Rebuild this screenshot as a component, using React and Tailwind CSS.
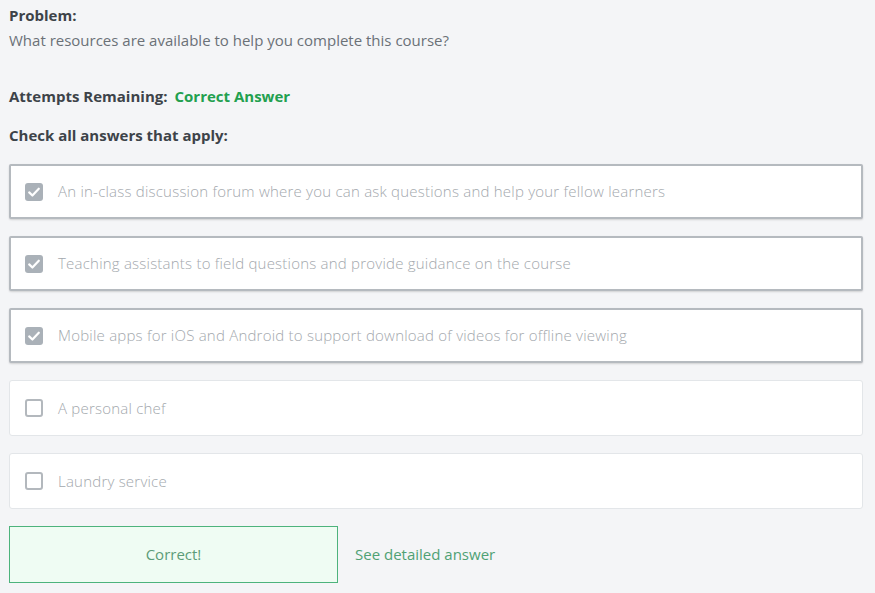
const options = [
  { label: "An in-class discussion forum where you can ask questions and help your fellow learners", checked: true },
  { label: "Teaching assistants to field questions and provide guidance on the course", checked: true },
  { label: "Mobile apps for iOS and Android to support download of videos for offline viewing", checked: true },
  { label: "A personal chef", checked: false },
  { label: "Laundry service", checked: false },
]

const Box = ({ checked }) =>
  checked ? (
    <span className="flex items-center justify-center w-[18px] h-[18px] rounded-[3px] bg-[#aab1b8] shrink-0">
      <svg width="18" height="18" viewBox="0 0 18 18" fill="none">
        <path d="M4.2 9.4l3.2 3.1 6.4-6.8" stroke="white" strokeWidth="2.2" strokeLinecap="round" strokeLinejoin="round" />
      </svg>
    </span>
  ) : (
    <span className="w-[18px] h-[18px] rounded-[3px] border-2 border-[#b3b8bd] bg-white shrink-0" />
  )

const App = () => {
  return (
    <div className="min-h-[593px] bg-[#f4f5f7] px-[9px] pt-[5px] text-[15px] font-['Open_Sans',sans-serif] text-[#3d4349]">
      <div className="font-bold leading-[20px]">Problem:</div>
      <div className="mt-[5px] leading-[20px] text-[#6b7177]">
        What resources are available to help you complete this course?
      </div>

      <div className="mt-[36px] flex gap-[7px] font-bold leading-[20px]">
        <span>Attempts Remaining:</span>
        <span className="text-[#22a04f]">Correct Answer</span>
      </div>

      <div className="mt-[19px] font-bold leading-[20px]">Check all answers that apply:</div>

      <div className="mt-[19px] mr-[3px] flex flex-col gap-[17px]">
        {options.map((o) =>
          o.checked ? (
            <div
              key={o.label}
              className="h-[55px] flex items-center gap-[15px] pl-[14px] bg-white border-2 border-[#b5babf] rounded-[2px] shadow-[0_1px_2px_rgba(0,0,0,0.15)]"
            >
              <Box checked />
              <span className="font-light tracking-[0.22px] text-[#a3a8ad]">{o.label}</span>
            </div>
          ) : (
            <div
              key={o.label}
              className="h-[56px] flex items-center gap-[15px] pl-[15px] bg-white border border-[#e3e6e9] rounded-[3px]"
            >
              <Box />
              <span className="font-light tracking-[0.22px] text-[#a3a8ad]">{o.label}</span>
            </div>
          )
        )}
      </div>

      <div className="mt-[17px] flex items-center gap-[17px]">
        <div className="w-[329px] h-[57px] flex items-center justify-center bg-[#effcf3] border border-[#4db37c] text-[#5c9c78]">
          Correct!
        </div>
        <a className="text-[#4fa174]">See detailed answer</a>
      </div>
    </div>
  )
}

export default App
